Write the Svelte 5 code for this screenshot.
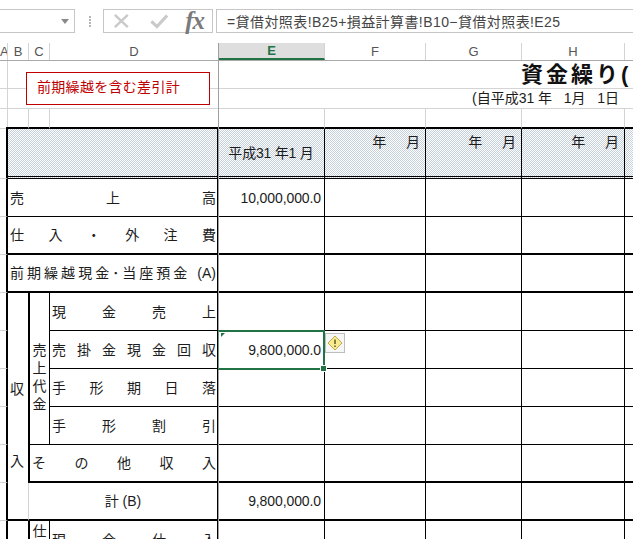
<script lang="ts">
  const headerCols = [
    { label: 'A' },
    { label: 'B' },
    { label: 'C' },
    { label: 'D' },
    { label: 'E', active: true },
    { label: 'F' },
    { label: 'G' },
    { label: 'H' },
    { label: '' }
  ];
  const monthCols = [0, 1, 2, 3];
  const blanks = [0, 1, 2, 3, 4];
</script>

{#snippet rest()}
  {#each monthCols as _}<td class="v"></td>{/each}
{/snippet}

<div class="app">
  <div class="toolbar">
    <div class="namebox">
      <span>E10</span>
      <svg class="caret" width="8" height="5" viewBox="0 0 8 5"><path d="M0 0h8L4 5z" fill="#8a8a8a" /></svg>
    </div>
    <div class="grip"><i></i><i></i><i></i><i></i></div>
    <div class="buttons">
      <svg width="18" height="16" viewBox="0 0 18 16"><path d="M2 1.5l14 13M16 1.5l-14 13" stroke="#c9c9c9" stroke-width="2.6" fill="none" /></svg>
      <svg width="20" height="16" viewBox="0 0 20 16"><path d="M1.5 8.5l6 5.5L18.5 2" stroke="#c9c9c9" stroke-width="3.4" fill="none" /></svg>
      <span class="fx">fx</span>
    </div>
    <div class="formula">=貸借対照表!B25+損益計算書!B10−貸借対照表!E25</div>
  </div>

  <div class="sheet">
    <div class="col-heads">
      {#each headerCols as col}
        <div class="col-head" class:active={col.active}>{col.label}</div>
      {/each}
    </div>

    <table>
      <colgroup>
        <col style="width: 8px" /><col style="width: 20px" /><col style="width: 22px" /><col style="width: 168px" />
        <col style="width: 107px" /><col style="width: 101px" /><col style="width: 96px" /><col style="width: 103px" /><col style="width: 60px" />
      </colgroup>
      <tbody>
        <tr class="r1">
          <td class="a grid"></td>
          <td colspan="3" class="grid-b"></td>
          <td colspan="5" class="grid-b"><div class="title">資金繰り(</div></td>
        </tr>
        <tr class="r2">
          <td class="a grid"></td>
          <td colspan="3" class="grid-b"></td>
          <td colspan="5" class="grid-b"><div class="period">(自平成31 年&nbsp;&nbsp;&nbsp;1月&nbsp;&nbsp;&nbsp;1日</div></td>
        </tr>
        <tr class="r3">
          <td class="a grid corner"></td>
          <td class="top"></td>
          <td class="top gl"></td>
          <td class="top"></td>
          {#each blanks as _}<td class="top gv"></td>{/each}
        </tr>

        <tr class="head">
          <td class="a"></td>
          <td colspan="3" class="shade v"></td>
          <td class="shade v center era">平成31 年1 月</td>
          {#each [0, 1, 2] as _}<td class="shade v ym">年　&nbsp;&nbsp;月</td>{/each}
          <td class="shade v"></td>
        </tr>

        <tr class="thin">
          <td class="a"></td>
          <td colspan="3" class="v"><div class="dist">売上高</div></td>
          <td class="v num">10,000,000.0</td>
          {@render rest()}
        </tr>
        <tr class="thick">
          <td class="a"></td>
          <td colspan="3" class="v"><div class="dist">仕入・外注費</div></td>
          <td class="v"></td>
          {@render rest()}
        </tr>
        <tr class="thick">
          <td class="a"></td>
          <td colspan="3" class="v"><div class="dist">前期繰越現金･当座預金 (A)</div></td>
          <td class="v"></td>
          {@render rest()}
        </tr>

        <tr class="thin">
          <td class="a"></td>
          <td rowspan="6" class="income">収<br />入</td>
          <td rowspan="4" class="sales">売<br />上<br />代<br />金</td>
          <td class="v"><div class="dist">現金売上</div></td>
          <td class="v"></td>
          {@render rest()}
        </tr>
        <tr class="thin">
          <td class="a"></td>
          <td class="v"><div class="dist">売掛金現金回収</div></td>
          <td class="v num selected">
            9,800,000.0
            <span class="flag"></span>
            <span class="frame"></span>
            <span class="handle"></span>
            <span class="warn">
              <svg width="16" height="16" viewBox="0 0 16 16">
                <path d="M8 1l7 7-7 7-7-7z" fill="#f7ec93" stroke="#c4aa45" />
                <path d="M8 4.5v4.5M8 10.5v1.5" stroke="#5a4a10" stroke-width="1.4" />
              </svg>
            </span>
          </td>
          {@render rest()}
        </tr>
        <tr class="thin">
          <td class="a"></td>
          <td class="v"><div class="dist">手形期日落</div></td>
          <td class="v"></td>
          {@render rest()}
        </tr>
        <tr class="thin">
          <td class="a"></td>
          <td class="v"><div class="dist">手形割引</div></td>
          <td class="v"></td>
          {@render rest()}
        </tr>
        <tr class="thick">
          <td class="a"></td>
          <td colspan="2" class="v strong-l"><div class="dist">その他収入</div></td>
          <td class="v"></td>
          {@render rest()}
        </tr>
        <tr class="thick">
          <td class="a"></td>
          <td colspan="2" class="v soft-l center">計 (B)</td>
          <td class="v num">9,800,000.0</td>
          {@render rest()}
        </tr>

        <tr class="thin">
          <td class="a"></td>
          <td></td>
          <td class="purchase">仕</td>
          <td class="v"><div class="dist">現金仕入</div></td>
          <td class="v"></td>
          {@render rest()}
        </tr>
      </tbody>
    </table>

    <div class="note">前期繰越を含む差引計</div>
    <div class="freeze"></div>
  </div>
</div>

<style>
  :global(body) {
    background: #fff;
    overflow: hidden;
  }

  .app {
    width: 633px;
    height: 539px;
    overflow: hidden;
    font-family: "Liberation Sans", "Noto Sans CJK JP", sans-serif;
    font-size: 14px;
    color: #1c1c1c;
  }

  .toolbar {
    height: 43px;
    box-sizing: border-box;
    padding-top: 9px;
    display: flex;
    align-items: flex-start;
  }

  .namebox,
  .buttons,
  .formula {
    height: 24px;
    box-sizing: border-box;
    border: 1px solid #c6c6c6;
    display: flex;
    align-items: center;
    flex: none;
  }

  .namebox {
    width: 108px;
    margin-left: -33px;
    padding: 0 5px 0 7px;
    justify-content: space-between;
    color: #444;
  }

  .grip {
    width: 4px;
    margin: 7px 12px 0 14px;
    display: flex;
    flex-direction: column;
    gap: 1px;
  }

  .grip i {
    display: block;
    width: 2px;
    height: 2px;
    background: #b5b5b5;
  }

  .buttons {
    width: 110px;
    padding: 0 8px 0 9px;
    gap: 20px;
  }

  .fx {
    font-family: "Liberation Serif", serif;
    font-style: italic;
    font-weight: 700;
    font-size: 25px;
    line-height: 22px;
    color: #7a7a7a;
    letter-spacing: -1px;
    margin-left: -3px;
  }

  .formula {
    margin-left: 3px;
    width: 440px;
    padding-left: 10px;
    color: #444;
    white-space: nowrap;
    letter-spacing: 0.42px;
  }

  .sheet {
    position: relative;
  }

  .col-heads {
    height: 18px;
    box-sizing: border-box;
    border-bottom: 1px solid #a9a9a9;
    display: grid;
    grid-template-columns: 8px 21px 21px 169px 106px 101px 96px 103px 60px;
    color: #555;
    font-size: 13px;
    line-height: 17px;
    text-align: center;
  }

  .col-head {
    border-right: 1px solid #d4d4d4;
    min-width: 0;
    overflow: hidden;
    white-space: nowrap;
  }

  .col-head.active {
    background: #dedede;
    box-sizing: border-box;
    height: 17px;
    border-bottom: 2px solid #217346;
    color: #217346;
    font-weight: 700;
    line-height: 16px;
  }

  table {
    width: 685px;
    table-layout: fixed;
    border-collapse: separate;
    border-spacing: 0;
  }

  td {
    padding: 0;
    line-height: 18px;
    white-space: nowrap;
    overflow: hidden;
  }

  tr.r1 { height: 28px; }
  tr.r2 { height: 20px; }
  tr.r3 { height: 20px; }
  tr.head { height: 50px; }
  tr.thin, tr.thick { height: 38px; }

  tr.thin td { border-bottom: 1px solid #000; }
  tr.thick td { border-bottom: 2px solid #000; }

  td.a,
  tr.thin td.a,
  tr.thick td.a {
    border-right: 2px solid #000;
    border-bottom: 1px solid #d4d4d4;
  }

  tr.head td.a { border-bottom: 1px solid #d4d4d4; }

  td.a.grid {
    border-right: 1px solid #d4d4d4;
  }

  td.corner {
    position: relative;
    overflow: visible;
  }

  td.corner::after {
    content: "";
    position: absolute;
    right: -1px;
    bottom: -1px;
    width: 2px;
    height: 2px;
    background: #000;
  }

  .grid-b { border-bottom: 1px solid #d4d4d4; }

  .top { border-bottom: 2px solid #000; }
  .gl { border-left: 1px solid #d4d4d4; border-right: 1px solid #d4d4d4; }
  .gv { border-right: 1px solid #d4d4d4; }

  .v { border-right: 1px solid #000; }

  .shade {
    background: url("data:image/svg+xml,%3Csvg xmlns='http://www.w3.org/2000/svg' width='2' height='2' shape-rendering='crispEdges'%3E%3Crect width='2' height='2' fill='%23fff'/%3E%3Crect width='1' height='1' fill='%23c4d0dc'/%3E%3Crect x='1' y='1' width='1' height='1' fill='%23c4d0dc'/%3E%3C/svg%3E");
  }

  tr.head td.shade { border-bottom: 3px double #000; }

  .center { text-align: center; }

  .era { letter-spacing: -0.2px; }

  .ym {
    vertical-align: top;
    text-align: right;
    padding: 4px 5px 0 0;
    word-spacing: -1px;
  }

  .dist {
    padding: 0 1px 0 2px;
    text-align: justify;
    text-align-last: justify;
    white-space: normal;
  }

  .num {
    text-align: right;
    padding-right: 3px;
    font-size: 14px;
    letter-spacing: -0.1px;
  }

  .income {
    padding: 60px 0 0 2px;
    line-height: 72px;
    vertical-align: top;
    border-bottom: 2px solid #000 !important;
  }

  .sales {
    border-left: 2px solid #000;
    border-right: 1px solid #000;
    padding-top: 16px;
    text-align: center;
    vertical-align: middle;
  }

  .purchase {
    border-left: 2px solid #000;
    border-right: 1px solid #000;
    text-align: center;
    vertical-align: top;
    padding-top: 1px;
  }

  .strong-l { border-left: 2px solid #000; }
  .soft-l { border-left: 1px solid #d4d4d4; }

  .title {
    padding-left: 303px;
    font-size: 22px;
    font-weight: 700;
    letter-spacing: 3px;
    line-height: 27px;
    color: #111;
  }

  .period {
    padding-left: 254px;
    line-height: 19px;
  }

  .note {
    position: absolute;
    left: 26px;
    top: 29px;
    width: 184px;
    height: 33px;
    box-sizing: border-box;
    border: 1px solid #c00000;
    background: #fff;
    color: #c00000;
    padding-left: 10px;
    letter-spacing: 0.3px;
    line-height: 28px;
    white-space: nowrap;
  }

  .freeze {
    position: absolute;
    left: 218px;
    top: 0;
    height: 496px;
    width: 1px;
    background: #a0a0a0;
  }

  td.selected {
    position: relative;
    overflow: visible;
  }

  .frame {
    position: absolute;
    left: 0;
    top: -1px;
    right: -1px;
    bottom: -2px;
    border: 2px solid #217346;
    border-left: 1px solid #6b9a80;
    z-index: 2;
  }

  .flag {
    position: absolute;
    left: 3px;
    top: 2px;
    border-top: 4px solid #217346;
    border-right: 4px solid transparent;
    z-index: 3;
  }

  .handle {
    position: absolute;
    right: -3px;
    bottom: -4px;
    width: 5px;
    height: 5px;
    background: #217346;
    border: 1px solid #fff;
    z-index: 4;
  }

  .warn {
    position: absolute;
    left: 107px;
    top: 2px;
    width: 20px;
    height: 20px;
    box-sizing: border-box;
    border: 1px solid #bdbdbd;
    background: #f6f6f6;
    display: flex;
    align-items: center;
    justify-content: center;
    z-index: 3;
  }
</style>
